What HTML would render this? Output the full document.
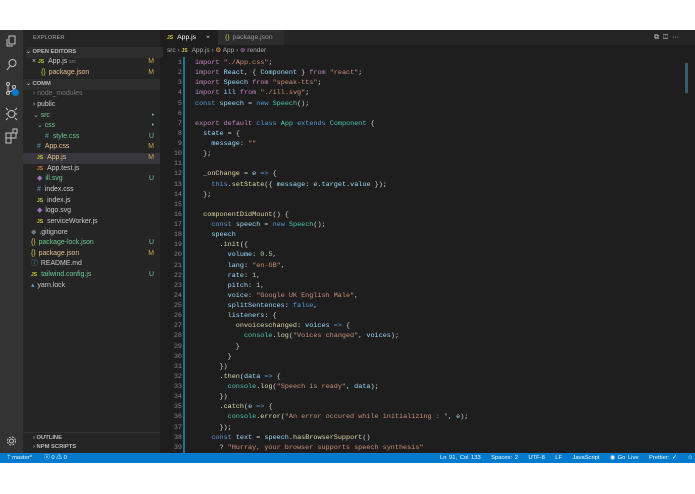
<!DOCTYPE html>
<html><head><meta charset="utf-8"><style>
*{margin:0;padding:0;box-sizing:border-box}
body{width:695px;height:494px;background:#fff;position:relative;overflow:hidden;font-family:"Liberation Sans",sans-serif}
.win{position:absolute;left:0;top:30px;width:695px;height:433px;background:#1e1e1e}
.act{position:absolute;left:0;top:0;width:23px;height:423px;background:#333}
.side{position:absolute;left:23px;top:0;width:137px;height:423px;background:#252526;color:#ccc;font-size:6.9px}
.side .r{position:absolute;left:0;width:137px;height:10.6px;line-height:10.6px;white-space:nowrap}
.hdr{font-weight:bold;font-size:5.8px;color:#bbb}
.m{position:absolute;right:6px;color:#c9a94b}
.u{position:absolute;right:6px;color:#73c991}
.js{color:#cbcb41;font-weight:bold;font-size:5px;margin-right:4px}
.cs{color:#519aba;margin-right:4px}
.br{color:#cbcb41;margin-right:3px}
.tabs{position:absolute;left:160px;top:0;width:535px;height:15px;background:#252526}
.tab{position:absolute;top:0;height:15px;line-height:15px;font-size:6.8px;padding-left:7px}
.crumb{position:absolute;left:160px;top:15px;width:535px;height:11px;line-height:11px;font-size:6.5px;color:#aaa;padding-left:7px}
.code{position:absolute;left:160px;top:28px;font-family:"Liberation Mono",monospace;font-size:6.8px;line-height:10.13px;white-space:pre;color:#d4d4d4}
.ln{position:absolute;left:0;top:0;width:22px;text-align:right;color:#858585}
.tx{position:absolute;left:35px;top:0}
.k{color:#c586c0}.s{color:#ce9178}.b{color:#569cd6}.c{color:#4ec9b0}.v{color:#9cdcfe}.f{color:#dcdcaa}.n{color:#b5cea8}
.status{position:absolute;left:0;top:423px;width:695px;height:10px;background:#007acc;color:#fff;font-size:5.8px;line-height:10px;white-space:nowrap}
</style></head><body>
<div class="win">
<div class="act">
<svg width="23" height="423" viewBox="0 0 23 423" fill="none" stroke="#c5c5c5" stroke-width="1">
<rect x="9" y="6" width="6" height="8"/><path d="M7 9v7h6"/>
<circle cx="12.5" cy="33" r="3.5"/><path d="M10 36l-3 4"/>
<circle cx="8" cy="54" r="1.5"/><circle cx="8" cy="63" r="1.5"/><circle cx="14" cy="57" r="1.5"/><path d="M8 55.5v6M14 58.5q0 3-6 3"/>
<circle cx="11.5" cy="84" r="3.5"/><path d="M6 84h2M15 84h2M8 80l-2-2M15 80l2-2M8 88l-2 2M15 88l2 2"/>
<path d="M6 103h5v5h-5zM11 103h5v5h-5zM6 108h5v5h-5zM13 99h4v4h-4z"/>
<circle cx="11.5" cy="411" r="2"/><circle cx="11.5" cy="411" r="4" stroke-dasharray="2 1.2"/>
</svg>
<div style="position:absolute;left:12px;top:59px;width:7px;height:7px;border-radius:50%;background:#007acc"></div>
</div>
<div class="side">
<div class="r" style="top:3px;left:10px;font-size:5.8px;color:#aaa">EXPLORER</div>
<div class="r hdr" style="top:17px;left:3px;background:#2d2d2e">&#8964; OPEN EDITORS</div>
<div class="r" style="top:27px;padding-left:9px">× <span class="js">JS</span>App.js <span style="color:#888;font-size:5px">src</span><span class="m">M</span></div>
<div class="r" style="top:38px;padding-left:18px;color:#e2c08d"><span class="br">{}</span>package.json<span class="m">M</span></div>
<div class="r hdr" style="top:49px;padding-left:3px;background:#2d2d2e">&#8964; COMM</div>
<div class="r" style="top:59px;padding-left:10px;color:#777">› node_modules</div>
<div class="r" style="top:70px;padding-left:10px">› public</div>
<div class="r" style="top:81px;padding-left:10px;color:#73c991">&#8964; src<span class="u" style="color:#73c991">•</span></div>
<div class="r" style="top:91px;padding-left:14px;color:#73c991">&#8964; css<span class="u">•</span></div>
<div class="r" style="top:102px;padding-left:22px;color:#73c991"><span class="cs">#</span>style.css<span class="u">U</span></div>
<div class="r" style="top:112px;padding-left:14px;color:#e2c08d"><span class="cs">#</span>App.css<span class="m">M</span></div>
<div class="r" style="top:123px;padding-left:14px;color:#e2c08d;background:#37373d"><span class="js">JS</span>App.js<span class="m">M</span></div>
<div class="r" style="top:134px;padding-left:14px"><span class="js" style="color:#e37933">JS</span>App.test.js</div>
<div class="r" style="top:144px;padding-left:14px;color:#73c991"><span style="color:#a074c4;margin-right:3px">◆</span>ill.svg<span class="u">U</span></div>
<div class="r" style="top:155px;padding-left:14px"><span class="cs">#</span>index.css</div>
<div class="r" style="top:166px;padding-left:14px"><span class="js">JS</span>index.js</div>
<div class="r" style="top:176px;padding-left:14px"><span style="color:#a074c4;margin-right:3px">◆</span>logo.svg</div>
<div class="r" style="top:187px;padding-left:14px"><span class="js">JS</span>serviceWorker.js</div>
<div class="r" style="top:198px;padding-left:8px"><span style="color:#6d8086;margin-right:3px">◆</span>.gitignore</div>
<div class="r" style="top:208px;padding-left:8px;color:#73c991"><span class="br">{}</span>package-lock.json<span class="u">U</span></div>
<div class="r" style="top:219px;padding-left:8px;color:#e2c08d"><span class="br">{}</span>package.json<span class="m">M</span></div>
<div class="r" style="top:229px;padding-left:8px"><span style="color:#519aba;margin-right:3px">ⓘ</span>README.md</div>
<div class="r" style="top:240px;padding-left:8px;color:#73c991"><span class="js">JS</span>tailwind.config.js<span class="u">U</span></div>
<div class="r" style="top:251px;padding-left:8px"><span style="color:#519aba;margin-right:3px">▴</span>yarn.lock</div>
<div class="r hdr" style="top:402px;padding-left:10px;border-top:1px solid #333">› OUTLINE</div>
<div class="r hdr" style="top:412px;padding-left:10px">› NPM SCRIPTS</div>
</div>
<div class="tabs">
<div class="tab" style="left:0;width:58px;background:#1e1e1e;color:#fff"><span class="js">JS</span>App.js<span style="position:absolute;left:46px;color:#ccc">×</span></div>
<div class="tab" style="left:58px;width:66px;background:#2d2d2d;color:#999"><span class="br">{}</span>package.json</div>
<div class="tab" style="left:487px;color:#ccc;font-size:7px">⧉ &nbsp;◫ &nbsp;···</div>
</div>
<div class="crumb">src › <span class="js">JS</span>App.js › <span style="color:#e2a03f">⚙</span> App › <span style="color:#b180d7">⊚</span> render</div>
<div style="position:absolute;left:183px;top:27px;width:2px;height:396px;background:#2a6f93"></div>
<div style="position:absolute;left:685px;top:33px;width:3px;height:30px;background:#3a5a70"></div>
<div class="code"><div class="ln">1
2
3
4
5
6
7
8
9
10
11
12
13
14
15
16
17
18
19
20
21
22
23
24
25
26
27
28
29
30
31
32
33
34
35
36
37
38
39</div><div class="tx"><span class="k">import</span> <span class="s">"./App.css"</span>;
<span class="k">import</span> <span class="v">React</span>, { <span class="v">Component</span> } <span class="k">from</span> <span class="s">"react"</span>;
<span class="k">import</span> <span class="v">Speech</span> <span class="k">from</span> <span class="s">"speak-tts"</span>;
<span class="k">import</span> <span class="v">ill</span> <span class="k">from</span> <span class="s">"./ill.svg"</span>;
<span class="b">const</span> <span class="v">speech</span> = <span class="b">new</span> <span class="c">Speech</span>();

<span class="k">export</span> <span class="k">default</span> <span class="b">class</span> <span class="c">App</span> <span class="b">extends</span> <span class="c">Component</span> {
  <span class="v">state</span> = {
    <span class="v">message</span>: <span class="s">""</span>
  };

  <span class="f">_onChange</span> = <span class="v">e</span> <span class="b">=&gt;</span> {
    <span class="b">this</span>.<span class="f">setState</span>({ <span class="v">message</span>: <span class="v">e</span>.<span class="v">target</span>.<span class="v">value</span> });
  };

  <span class="f">componentDidMount</span>() {
    <span class="b">const</span> <span class="v">speech</span> = <span class="b">new</span> <span class="c">Speech</span>();
    <span class="v">speech</span>
      .<span class="f">init</span>({
        <span class="v">volume</span>: <span class="n">0.5</span>,
        <span class="v">lang</span>: <span class="s">"en-GB"</span>,
        <span class="v">rate</span>: <span class="n">1</span>,
        <span class="v">pitch</span>: <span class="n">1</span>,
        <span class="v">voice</span>: <span class="s">"Google UK English Male"</span>,
        <span class="v">splitSentences</span>: <span class="b">false</span>,
        <span class="v">listeners</span>: {
          <span class="f">onvoiceschanged</span>: <span class="v">voices</span> <span class="b">=&gt;</span> {
            <span class="c">console</span>.<span class="f">log</span>(<span class="s">"Voices changed"</span>, <span class="v">voices</span>);
          }
        }
      })
      .<span class="f">then</span>(<span class="v">data</span> <span class="b">=&gt;</span> {
        <span class="c">console</span>.<span class="f">log</span>(<span class="s">"Speech is ready"</span>, <span class="v">data</span>);
      })
      .<span class="f">catch</span>(<span class="v">e</span> <span class="b">=&gt;</span> {
        <span class="c">console</span>.<span class="f">error</span>(<span class="s">"An error occured while initializing : "</span>, <span class="v">e</span>);
      });
    <span class="b">const</span> <span class="v">text</span> = <span class="v">speech</span>.<span class="f">hasBrowserSupport</span>()
      ? <span class="s">"Hurray, your browser supports speech synthesis"</span></div></div>
<div class="status">
<span style="position:absolute;left:7px">ᛘ master*</span>
<span style="position:absolute;left:44px">ⓧ 0 ⚠ 0</span>
<span style="position:absolute;left:440px;word-spacing:1px">Ln 91, Col 133 &nbsp;&nbsp; Spaces: 2 &nbsp;&nbsp; UTF-8 &nbsp;&nbsp; LF &nbsp;&nbsp; JavaScript &nbsp;&nbsp; ◉ Go Live &nbsp;&nbsp; Prettier: ✓ &nbsp;&nbsp; ☺ &nbsp;&nbsp; 🔔︎1</span>
</div>
</div>
</body></html>
